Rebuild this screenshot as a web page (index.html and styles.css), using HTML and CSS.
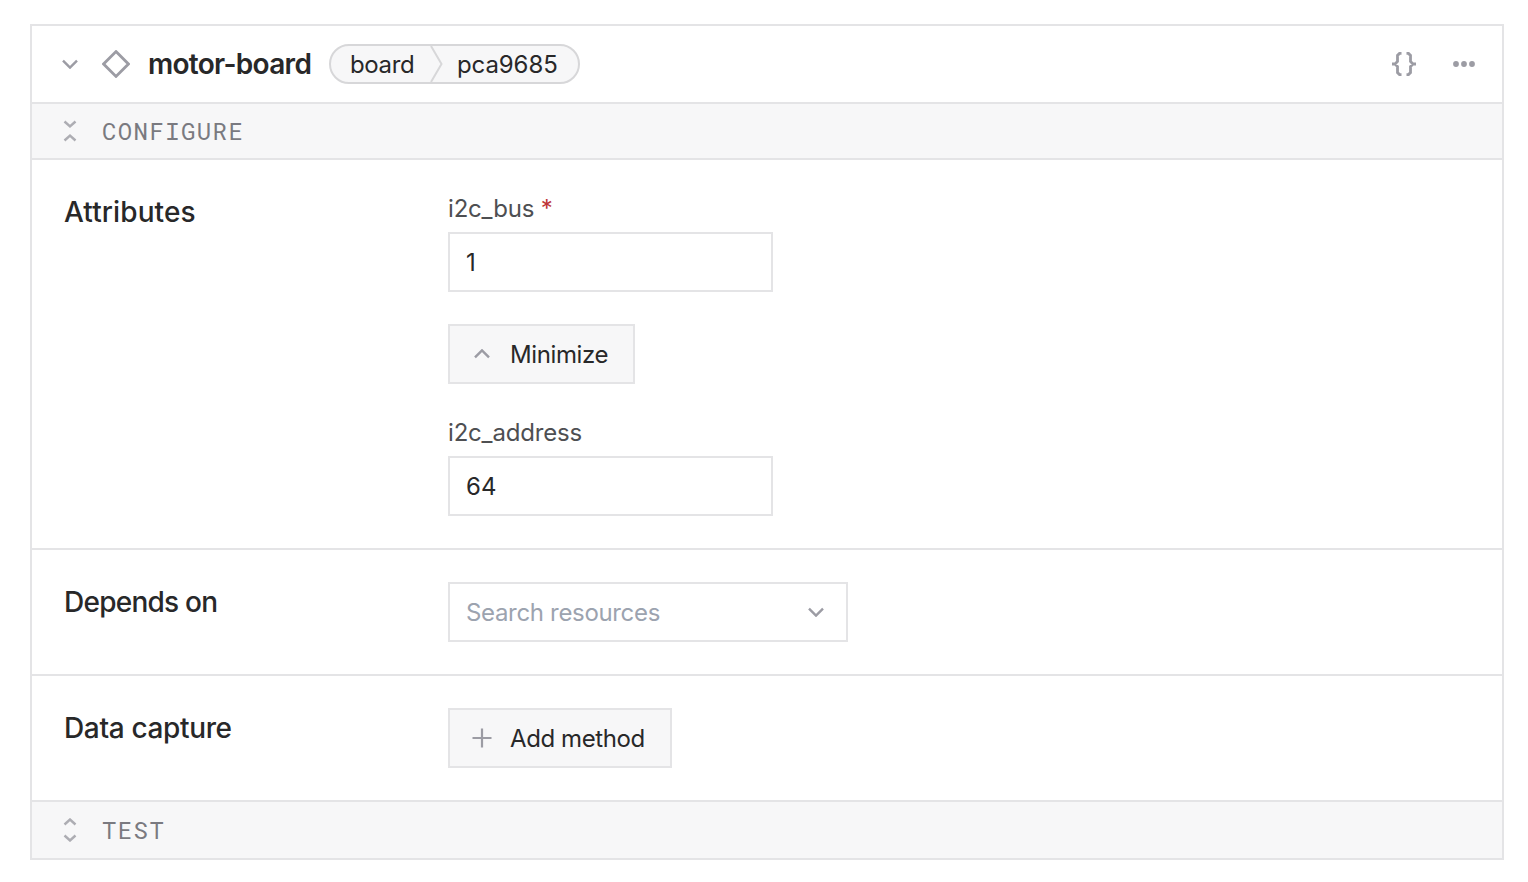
FILE: index.html
```html
<!DOCTYPE html>
<html lang="en">
<head>
<meta charset="utf-8">
<title>motor-board</title>
<link rel="stylesheet" href="styles.css">
</head>
<body>
<main class="card">
  <header class="card-header">
    <svg class="icon chevron" width="16" height="10" viewBox="0 0 16 10"><path d="M1 1.6 8 8.6 15 1.6"/></svg>
    <svg class="icon diamond" width="28" height="28" viewBox="0 0 28 28"><path d="M14 1.6 26.4 14 14 26.4 1.6 14Z"/></svg>
    <h1 class="title">motor-board</h1>
    <div class="pill">
      <span class="pill-type">board</span>
      <svg class="pill-divider" width="13" height="36" viewBox="0 0 13 36"><path d="M1 0 11.5 18 1 36"/></svg>
      <span class="pill-model">pca9685</span>
    </div>
    <div class="actions">
      <svg class="icon braces" width="24" height="24" viewBox="0 0 24 24"><path d="M9.5 1.4H7.5L5.500 3.400V9.500L3 12H0M3 12 5.500 14.500V20.600L7.500 22.600H9.500M14.500 1.400H16.500L18.500 3.400V9.500L21 12H24M21 12 18.500 14.500V20.600L16.500 22.600H14.500"/></svg>
      <svg class="dots" width="22" height="6" viewBox="0 0 22 6"><circle cx="3" cy="3" r="2.900"/><circle cx="11" cy="3" r="2.900"/><circle cx="19" cy="3" r="2.900"/></svg>
    </div>
  </header>
  <div class="bar bar-configure">
    <svg class="icon fold" width="14" height="22" viewBox="0 0 14 22"><path d="M1.500 1.500 7 6.500 12.500 1.500M1.500 20.500 7 15.500 12.500 20.500"/></svg>
    <span>CONFIGURE</span>
  </div>
  <section class="section attributes">
    <h2 class="section-title title-attributes">Attributes</h2>
    <div class="fields">
      <label class="label label-bus" for="bus">i2c_bus <span class="required">*</span></label>
      <input class="input" id="bus" value="1">
      <button class="button minimize">
        <svg class="icon chevron" width="16" height="10" viewBox="0 0 16 10"><path d="M1 8.400 8 1.400 15 8.400"/></svg>
        <span>Minimize</span>
      </button>
      <label class="label label-address" for="address">i2c_address</label>
      <input class="input" id="address" value="64">
    </div>
  </section>
  <section class="section">
    <h2 class="section-title title-depends">Depends on</h2>
    <div class="select">
      <span>Search resources</span>
      <svg class="icon chevron" width="16" height="10" viewBox="0 0 16 10"><path d="M1 1.600 8 8.600 15 1.600"/></svg>
    </div>
  </section>
  <section class="section">
    <h2 class="section-title title-capture">Data capture</h2>
    <button class="button add">
      <svg class="icon plus" width="20" height="20" viewBox="0 0 20 20"><path d="M10 0.500V19.500M0.500 10H19.500"/></svg>
      <span>Add method</span>
    </button>
  </section>
  <div class="bar bar-test">
    <svg class="icon fold" width="14" height="24" viewBox="0 0 14 24"><path d="M1.500 6.500 7 1.500 12.500 6.500M1.500 17.500 7 22.500 12.500 17.500"/></svg>
    <span>TEST</span>
  </div>
</main>
</body>
</html>
```
FILE: styles.css
```css
* { box-sizing: border-box; }
body { margin: 0; padding: 24px 24px 22px 30px; background: #fff; color: #282829; font-family: Inter, sans-serif; font-size: 24px; font-weight: 430; line-height: 30px; }
.card { width: 1474px; height: 836px; border: 2px solid #e4e4e6; }
.card-header { height: 76px; padding: 0 27px 0 30px; display: flex; align-items: center; }
.icon { flex: none; fill: none; stroke: #9c9ca4; stroke-width: 2.4; }
.diamond { margin-left: 24px; stroke-width: 2.8; }
.title { margin: 0 0 0 18px; width: 181px; font-size: 28px; line-height: 36px; font-weight: 620; letter-spacing: -0.7px; white-space: nowrap; }
.pill { width: 251px; height: 40px; border: 2px solid #d7d7d9; border-radius: 20px; background: #f7f7f8; display: flex; align-items: center; white-space: nowrap; }
.pill-type { width: 99px; padding: 2px 0 0 19px; letter-spacing: -0.35px; }
.pill-divider { flex: none; fill: none; stroke: #d7d7d9; stroke-width: 2; }
.pill-model { margin-left: 14px; padding-top: 2px; letter-spacing: -0.1px; }
.actions { margin-left: auto; display: flex; align-items: center; gap: 37px; }
.braces { stroke-width: 2.8; }
.dots { fill: #9c9ca4; }
.bar { height: 58px; padding-left: 31px; display: flex; align-items: center; gap: 25px; border-top: 2px solid #e4e4e6; background: #f7f7f8; color: #7a7a80; font-family: "Roboto Mono", "DejaVu Sans Mono", monospace; font-size: 24px; letter-spacing: 1.4px; }
.bar-configure { border-bottom: 2px solid #e4e4e6; }
.fold { stroke: #adadb3; }
.section { height: 126px; padding: 32px; display: grid; grid-template-columns: 384px auto; align-items: start; justify-content: start; }
.section + .section { border-top: 2px solid #e4e4e6; }
.attributes { height: 388px; }
.section-title { margin: 2px 0 0; font-size: 28px; line-height: 36px; font-weight: 520; white-space: nowrap; }
.title-attributes { letter-spacing: 0.1px; }
.title-depends { letter-spacing: -0.75px; }
.title-capture { letter-spacing: -0.35px; }
.fields { display: flex; flex-direction: column; align-items: flex-start; }
.label { height: 40px; line-height: 34px; color: #4e4f52; letter-spacing: -0.18px; white-space: nowrap; }
.required { color: #be3536; }
.input { width: 325px; height: 60px; margin: 0; padding: 0 16px; border: 2px solid #e4e4e6; border-radius: 0; background: #fff; color: #282829; font: inherit; outline: none; }
.button { height: 60px; margin: 0; padding: 0 0 0 24px; border: 2px solid #e4e4e6; border-radius: 0; background: #f7f7f8; color: #282829; font: inherit; letter-spacing: -0.4px; display: flex; align-items: center; gap: 20px; white-space: nowrap; }
.button span, .select span { padding-top: 2px; }
.minimize { width: 187px; margin: 32px 0; }
.add { width: 224px; padding-left: 22px; gap: 18px; }
.plus { stroke-width: 2.2; }
.select { width: 400px; height: 60px; padding: 0 22px 0 16px; border: 2px solid #e4e4e6; display: flex; align-items: center; justify-content: space-between; color: #9ca3af; letter-spacing: -0.33px; }
```
